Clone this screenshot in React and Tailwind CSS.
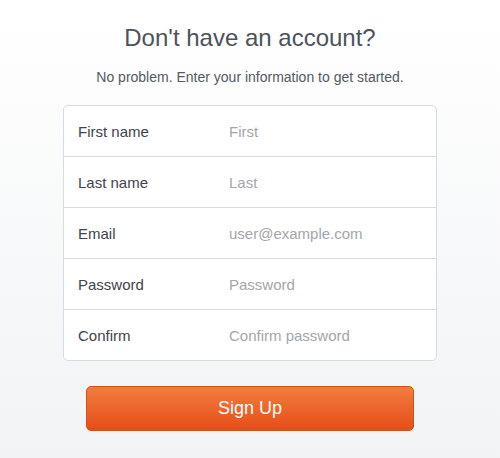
import React from "react";

const fields = [
  { label: "First name", placeholder: "First", type: "text" },
  { label: "Last name", placeholder: "Last", type: "text" },
  { label: "Email", placeholder: "user@example.com", type: "email" },
  { label: "Password", placeholder: "Password", type: "password" },
  { label: "Confirm", placeholder: "Confirm password", type: "password" },
];

export default function App() {
  return (
    <div
      className="w-[500px] h-[458px] bg-gradient-to-b from-white to-[#f2f3f5] flex flex-col items-center"
      style={{ fontFamily: '"Liberation Sans", Arial, sans-serif' }}
    >
      <h1 className="mt-[22px] text-[24px] leading-[32px] text-[#4d525a]">
        Don't have an account?
      </h1>
      <p className="mt-[13px] text-[14px] leading-[20px] text-[#55595f]">
        No problem. Enter your information to get started.
      </p>

      <div className="mt-[18px] w-[374px] bg-white border border-[#d6dbe1] rounded-[5px] overflow-hidden">
        {fields.map((f, i) => (
          <div
            key={f.label}
            className={`flex items-center px-[14px] pt-[2px] ${
              i > 0 ? "h-[51px] border-t border-[#d6dbe1]" : "h-[50px]"
            }`}
          >
            <span className="w-[151px] shrink-0 text-[15px] text-[#3f434a]">{f.label}</span>
            <input
              type={f.type}
              placeholder={f.placeholder}
              className="flex-1 min-w-0 text-[15px] outline-none placeholder:text-[#a3a6aa] text-[#3f434a] bg-transparent"
            />
          </div>
        ))}
      </div>

      <button className="mt-[25px] w-[328px] h-[45px] rounded-[5px] border border-[#cf5219] bg-gradient-to-b from-[#f07c3e] to-[#e74c15] text-white text-[18px]">
        Sign Up
      </button>
    </div>
  );
}
